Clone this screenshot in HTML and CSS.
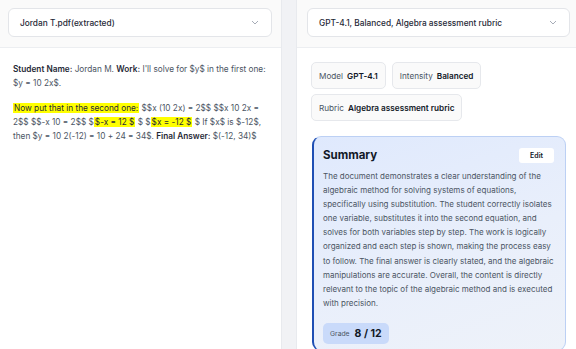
FILE: index.html
```html
<!DOCTYPE html>
<html>
<head>
<meta charset="utf-8">
<link rel="stylesheet" href="styles.css">
</head>
<body>
<div class="app">
  <section class="pane pane-left">
    <header class="pane-head">
      <div class="select">
        <span>Jordan T.pdf(extracted)</span>
        <svg class="chev" width="8" height="5" viewBox="0 0 8 5"><path d="M1 1l3 3 3-3" fill="none" stroke="#9ca3af" stroke-width="0.9"/></svg>
      </div>
    </header>
    <div class="doc">
      <p><b>Student Name:</b> Jordan M. <b>Work:</b> I'll solve for $y$ in the first one: $y = 10 2x$.</p>
      <p><mark>Now put that in the second one:</mark> $$x (10 2x) = 2$$ $$x 10 2x = 2$$ $$-x 10 = 2$$ $<mark>$-x = 12 $</mark> $ $<mark>$x = -12 $</mark> $ If $x$ is $-12$, then $y = 10 2(-12) = 10 + 24 = 34$. <b>Final Answer:</b> $(-12, 34)$</p>
    </div>
  </section>
  <div class="gutter"></div>
  <section class="pane pane-right">
    <header class="pane-head head-right">
      <div class="select">
        <span>GPT-4.1, Balanced, Algebra assessment rubric</span>
        <svg class="chev" width="8" height="5" viewBox="0 0 8 5"><path d="M1 1l3 3 3-3" fill="none" stroke="#9ca3af" stroke-width="0.9"/></svg>
      </div>
    </header>
    <div class="right-body">
      <div class="chips">
        <div class="chip"><span class="lbl">Model</span><span class="val">GPT-4.1</span></div>
        <div class="chip"><span class="lbl">Intensity</span><span class="val">Balanced</span></div>
        <div class="chip"><span class="lbl">Rubric</span><span class="val">Algebra assessment rubric</span></div>
      </div>
      <div class="card">
        <div class="card-head">
          <h2>Summary</h2>
          <button class="edit">Edit</button>
        </div>
        <p class="summary">The document demonstrates a clear understanding of the algebraic method for solving systems of equations, specifically using substitution. The student correctly isolates one variable, substitutes it into the second equation, and solves for both variables step by step. The work is logically organized and each step is shown, making the process easy to follow. The final answer is clearly stated, and the algebraic manipulations are accurate. Overall, the content is directly relevant to the topic of the algebraic method and is executed with precision.</p>
        <div class="grade"><span class="glbl">Grade</span><span class="gval">8 / 12</span></div>
      </div>
    </div>
  </section>
</div>
</body>
</html>
```

FILE: styles.css
```css
* { box-sizing: border-box; }
html, body { margin: 0; padding: 0; }
body {
  font-family: Inter, "Noto Sans", sans-serif;
  background: #f1f2f5;
  width: 576px;
  height: 349px;
  overflow: hidden;
}
.app {
  display: flex;
  height: 349px;
}
.pane {
  background: #fff;
  display: flex;
  flex-direction: column;
  overflow: hidden;
}
.pane-left {
  width: 282px;
  border-right: 1px solid #e8eaee;
}
.gutter {
  width: 14px;
  background: #f1f2f5;
}
.pane-right {
  flex: 1;
  border-left: 1px solid #e8eaee;
}
.pane-head {
  flex-shrink: 0;
  height: 48px;
  background: #fafafa;
  border-bottom: 1px solid #eceef1;
  padding: 8px 9px 0 8px;
}
.head-right {
  padding: 8px 6px 0 10px;
}
.select {
  height: 29px;
  background: #fff;
  border: 1px solid #e3e5e9;
  border-radius: 6px;
  display: flex;
  align-items: center;
  justify-content: space-between;
  padding: 0 12px 0 11px;
  font-size: 8.3px;
  font-weight: 500;
  color: #1f2937;
}
.doc {
  padding: 14px 10px 0 13px;
  font-size: 8.25px;
  line-height: 14px;
  color: #4b5563;
}
.doc p { margin: 0 0 11px; }
.doc b { color: #1f2937; font-weight: 600; }
.doc mark { background: #ffff00; color: #1f2937; padding: 0 1px; }
.right-body {
  padding: 14px 10px 0 14px;
}
.chips {
  display: flex;
  flex-wrap: wrap;
  gap: 5px 6px;
  width: 180px;
}
.chip {
  height: 27px;
  display: flex;
  align-items: center;
  gap: 4px;
  padding: 0 7px;
  border: 1px solid #e6e8ec;
  border-radius: 5px;
  background: #fafafa;
  font-size: 8.2px;
}
.lbl { color: #4b5563; }
.val { color: #111827; font-weight: 600; }
.card {
  margin: 15px 0 0 1px;
  border: 1px solid #bcd0f4;
  border-left: 2px solid #1f4fb4;
  border-radius: 9px;
  background: linear-gradient(160deg, #dfe9fd 0%, #e9effb 55%, #eef2f9 100%);
  padding: 10px 11px 6px 9px;
}
.card-head {
  display: flex;
  align-items: center;
  justify-content: space-between;
  height: 16px;
}
.card-head h2 {
  margin: 0;
  font-size: 11.5px;
  font-weight: 700;
  color: #111827;
}
.edit {
  font-family: inherit;
  background: #fff;
  border: none;
  border-radius: 3px;
  width: 35px;
  height: 15px;
  font-size: 7px;
  font-weight: 600;
  color: #111827;
  padding: 0;
}
.summary {
  margin: 6px -5px 10px 0;
  font-size: 8px;
  line-height: 14.1px;
  color: #4b5563;
}
.grade {
  display: inline-flex;
  align-items: center;
  gap: 5px;
  height: 21px;
  padding: 0 7px;
  background: #c9dafa;
  border-radius: 5px;
}
.glbl { font-size: 6.8px; color: #4b5563; }
.gval { font-size: 10.5px; font-weight: 700; color: #111827; }
```
